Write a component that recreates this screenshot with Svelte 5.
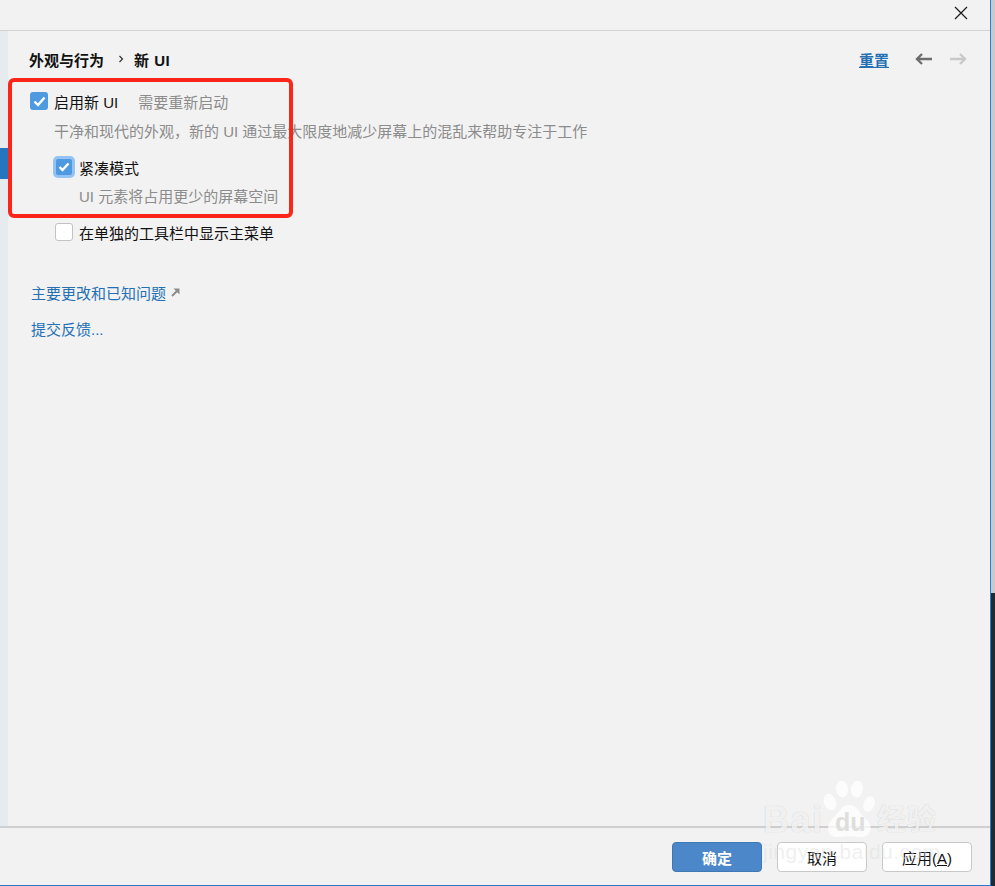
<script lang="ts">
	const options = { enableNew: true, compact: true, separateMenu: false };
</script>

<div class="screen">
	<div class="window">
		<header class="titlebar">
			<button class="close" aria-label="关闭">
				<svg width="14" height="14" viewBox="0 0 14 14"><path d="M1 1 13 13M13 1 1 13" stroke="#1a1a1a" stroke-width="1.2" fill="none" /></svg>
			</button>
		</header>

		<div class="middle">
			<aside class="sidebar"><div class="selected"></div></aside>

			<main class="content">
				<div class="crumbs">
					<div class="path">
						<span>外观与行为</span>
						<svg class="chevron" width="6" height="8" viewBox="0 0 6 8"><path d="M1.5 1 4.5 4 1.5 7" stroke="#333" stroke-width="1.2" fill="none" /></svg>
						<span class="leaf">新 UI</span>
					</div>
					<div class="tools">
						<span class="reset">重置</span>
						<svg width="18" height="12" viewBox="0 0 18 12"><path d="M17 6H2M7 1 2 6 7 11" stroke="#6e6e6e" stroke-width="2.4" fill="none" /></svg>
						<svg width="18" height="12" viewBox="0 0 18 12"><path d="M1 6H16M11 1 16 6 11 11" stroke="#c9c9c9" stroke-width="2.4" fill="none" /></svg>
					</div>
				</div>

				<label class="row first">
					<span class="box checked" class:on={options.enableNew}>
						<svg width="13" height="11" viewBox="0 0 13 11"><path d="M1.5 5.5 5 9 11.5 1.5" stroke="#fff" stroke-width="2.4" fill="none" /></svg>
					</span>
					<span>启用新 UI</span>
					<span class="hint restart">需要重新启动</span>
				</label>
				<p class="hint desc">干净和现代的外观，新的 UI 通过最大限度地减少屏幕上的混乱来帮助专注于工作</p>

				<label class="row nested compact-row">
					<span class="box checked focused" class:on={options.compact}>
						<svg width="12" height="10" viewBox="0 0 12 10"><path d="M1.5 5 4.5 8 10.5 1.5" stroke="#fff" stroke-width="2.4" fill="none" /></svg>
					</span>
					<span>紧凑模式</span>
				</label>
				<p class="hint desc nested-desc">UI 元素将占用更少的屏幕空间</p>

				<label class="row nested menu-row">
					<span class="box" class:on={options.separateMenu}></span>
					<span>在单独的工具栏中显示主菜单</span>
				</label>

				<div class="link known">
					<span>主要更改和已知问题</span>
					<svg width="9" height="9" viewBox="0 0 9 9"><path d="M1 8 6 3" stroke="#8c8c8c" stroke-width="2" fill="none" /><path d="M2.5 .5H8.5V6.5Z" fill="#8c8c8c" /></svg>
				</div>
				<div class="link feedback">提交反馈...</div>
			</main>
		</div>

		<footer class="footer">
			<button class="btn primary">确定</button>
			<button class="btn">取消</button>
			<button class="btn">应用(<u>A</u>)</button>
		</footer>
	</div>

	<div class="edge">
		<div class="edge-top"></div>
		<div class="edge-bottom"></div>
	</div>

	<div class="highlight"></div>

	<div class="watermark">
		<div class="mark-line">
			<span class="mark-latin">Bai</span>
			<svg class="paw" width="52" height="58" viewBox="0 0 52 58">
				<g fill="#fff" fill-opacity="0.75">
					<ellipse cx="7" cy="22" rx="6" ry="8.5" transform="rotate(-20 7 22)" />
					<ellipse cx="19" cy="9" rx="6" ry="8.5" transform="rotate(-8 19 9)" />
					<ellipse cx="34" cy="9" rx="6" ry="8.5" transform="rotate(8 34 9)" />
					<ellipse cx="46" cy="24" rx="5.5" ry="8" transform="rotate(22 46 24)" />
					<path d="M26 25C34 25 36 33 43 39 52 47 47 58 37 57 30 56 22 56 15 57 5 58 2 47 9 39 16 33 18 25 26 25Z" />
				</g>
			</svg>
			<span class="mark-du">du</span>
			<span class="mark-cn">经验</span>
		</div>
		<div class="mark-url">jingyan.baidu.com</div>
	</div>
</div>

<style>
	:global(body) {
		margin: 0;
		background: #f2f2f2;
	}

	.screen {
		position: relative;
		display: flex;
		width: 995px;
		height: 886px;
		overflow: hidden;
		font-family: 'Liberation Sans', 'Noto Sans CJK SC', sans-serif;
		font-size: 15px;
		color: #111;
	}

	.window {
		display: flex;
		flex-direction: column;
		width: 990px;
		height: 885px;
		background: #f2f2f2;
		border-bottom: 1px solid #2b7bc4;
	}

	.titlebar {
		display: flex;
		justify-content: flex-end;
		flex: none;
		height: 30px;
		border-bottom: 1px solid #d2d2d2;
	}

	.close {
		width: 14px;
		height: 14px;
		margin: 6px 22px 0 0;
		padding: 0;
		border: none;
		background: none;
		line-height: 0;
	}

	.middle {
		display: flex;
		flex: 1;
		min-height: 0;
	}

	.sidebar {
		flex: none;
		width: 8px;
		padding-top: 117px;
		background: #e6ebf0;
	}

	.selected {
		height: 31px;
		background: #2675bf;
	}

	.content {
		flex: 1;
		padding: 0 23px 0 21px;
	}

	.crumbs {
		display: flex;
		align-items: center;
		justify-content: space-between;
		height: 20px;
		margin-top: 18px;
	}

	.path {
		display: flex;
		align-items: center;
		font-weight: 700;
	}

	.chevron {
		margin: 0 10px 0 14px;
	}

	.leaf {
		letter-spacing: 0.5px;
	}

	.tools {
		display: flex;
		align-items: center;
		gap: 16px;
	}

	.reset {
		margin-right: 10px;
		color: #2470b3;
		font-weight: 700;
		text-decoration: underline;
	}

	.row {
		display: flex;
		align-items: center;
		height: 20px;
	}

	.first {
		margin: 22px 0 0 1px;
	}

	.box {
		display: flex;
		flex: none;
		align-items: center;
		justify-content: center;
		box-sizing: border-box;
		width: 18px;
		height: 18px;
		margin-right: 6px;
		border: 1px solid #c2c2c2;
		border-radius: 3px;
		background: #fff;
	}

	.checked {
		border: none;
		background: #4e9ae1;
	}

	.focused {
		width: 16px;
		height: 16px;
		margin: 0 7px 0 1px;
		border-radius: 2px;
		box-shadow: 0 0 0 3px #94c2f4;
	}

	.restart {
		margin-left: 20px;
	}

	.hint {
		color: #8c8c8c;
	}

	.desc {
		margin: 11px 0 0 25px;
		line-height: 20px;
	}

	.nested {
		margin-left: 26px;
	}

	.compact-row {
		margin-top: 15px;
	}

	.nested-desc {
		margin: 10px 0 0 50px;
	}

	.menu-row {
		margin-top: 15px;
	}

	.link {
		display: flex;
		align-items: center;
		gap: 5px;
		height: 20px;
		margin-left: 2px;
		color: #2470b3;
	}

	.known {
		margin-top: 40px;
	}

	.feedback {
		margin-top: 16px;
	}

	.footer {
		display: flex;
		flex: none;
		justify-content: flex-end;
		gap: 15px;
		box-sizing: border-box;
		height: 59px;
		padding: 14px 18px 0 0;
		border-top: 2px solid #cfcfcf;
	}

	.btn {
		box-sizing: border-box;
		width: 90px;
		height: 30px;
		padding: 0;
		border: 1px solid #c9c9c9;
		border-radius: 4px;
		background: #fff;
		color: #111;
		font: inherit;
	}

	.primary {
		border-color: #3f78b5;
		background: #4c87c9;
		color: #fff;
		font-weight: 700;
	}

	.edge {
		display: flex;
		flex: none;
		flex-direction: column;
		width: 5px;
		box-sizing: border-box;
		border-left: 1px solid #1a82e0;
	}

	.edge-top {
		flex: none;
		height: 593px;
		background: #c9c9c9;
	}

	.edge-bottom {
		flex: 1;
		background: #26292c;
	}

	.highlight {
		position: absolute;
		left: 8px;
		top: 78px;
		box-sizing: border-box;
		width: 285px;
		height: 140px;
		border: 4px solid #fb2518;
		border-radius: 6px;
		pointer-events: none;
	}

	.watermark {
		position: absolute;
		left: 763px;
		top: 780px;
		width: 190px;
		color: rgba(255, 255, 255, 0.8);
		text-shadow: 0 0 1px rgba(0, 0, 0, 0.22);
		pointer-events: none;
	}

	.mark-line {
		position: relative;
		height: 60px;
	}

	.mark-latin {
		position: absolute;
		left: 0;
		top: 20px;
		font-size: 36px;
		font-weight: 700;
		letter-spacing: 1.5px;
		line-height: 40px;
	}

	.paw {
		position: absolute;
		left: 60px;
		top: 0;
	}

	.mark-du {
		position: absolute;
		left: 72px;
		top: 29px;
		color: #dedede;
		font-size: 25px;
		font-weight: 700;
		line-height: 26px;
		text-shadow: none;
	}

	.mark-cn {
		position: absolute;
		left: 114px;
		top: 21px;
		font-size: 29px;
		font-weight: 700;
		letter-spacing: 1px;
		line-height: 38px;
	}

	.mark-url {
		font-size: 21px;
		line-height: 24px;
		letter-spacing: 0.5px;
		color: rgba(225, 225, 225, 0.5);
		text-shadow: none;
	}
</style>
